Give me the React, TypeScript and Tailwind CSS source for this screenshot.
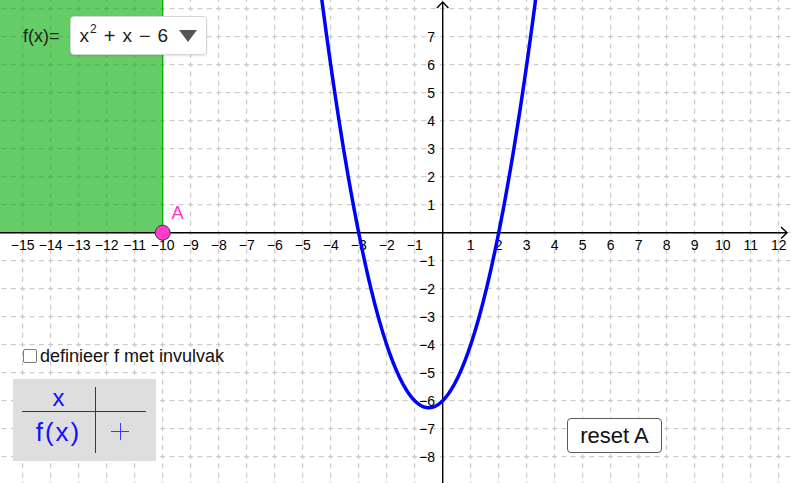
import React from 'react';

// graph coordinate system (pixels per unit and origin)
const U = 28;
const X0 = 442.7;
const Y0 = 232.7;
const W = 791;
const H = 483;

const px = (x: number) => X0 + x * U;
const py = (y: number) => Y0 - y * U;
const minus = (n: number) => (n < 0 ? '\u2212' + Math.abs(n) : String(n));

function Graph() {
  const vLines: number[] = [];
  for (let k = -15; k <= 12; k++) vLines.push(px(k));
  const hLines: number[] = [];
  for (let k = -8; k <= 8; k++) hLines.push(py(k));

  const xLabels: number[] = [];
  for (let k = -15; k <= 12; k++) if (k !== 0) xLabels.push(k);
  const yLabels: number[] = [];
  for (let k = -8; k <= 7; k++) if (k !== 0) yLabels.push(k);

  let d = '';
  for (let x = -4.6; x <= 3.6; x += 0.02) {
    const y = x * x + x - 6;
    d += (d ? ' L' : 'M') + px(x).toFixed(2) + ' ' + py(y).toFixed(2);
  }

  return (
    <svg className="absolute inset-0" width={W} height={H} viewBox={`0 0 ${W} ${H}`}>
      {/* grid */}
      <g stroke="#c0c0c0" strokeWidth="1" strokeDasharray="5 4.33">
        {vLines.map((x) => (
          <line key={'v' + x} x1={x} y1={Y0 - 9 * U - 2.5} x2={x} y2={H} />
        ))}
        {hLines.map((y) => (
          <line key={'h' + y} x1={X0 - 16 * U - 2.5} y1={y} x2={W} y2={y} />
        ))}
      </g>

      {/* shaded region left of A */}
      <rect x={-2} y={-2} width={px(-10) + 2} height={Y0 + 2} fill="rgba(0,172,0,0.6)" />
      <line x1={px(-10)} y1={0} x2={px(-10)} y2={Y0} stroke="#00b000" strokeWidth="1.3" />

      {/* axes */}
      <g stroke="#000" strokeWidth="1.4" fill="none">
        <line x1={0} y1={Y0} x2={787} y2={Y0} />
        <polyline points={`781,227 787,${Y0} 781,238.5`} />
        <line x1={X0} y1={2} x2={X0} y2={H} />
        <polyline points={`437,8 ${X0},2 448.4,8`} />
      </g>

      <g fontFamily="'Liberation Sans', Arial, sans-serif" fontSize="14" fill="#000">
        {xLabels.map((k) => (
          <text key={'xl' + k} x={px(k)} y={Y0 + 17.5} textAnchor="middle">
            {minus(k)}
          </text>
        ))}
        {yLabels.map((k) => (
          <text key={'yl' + k} x={435} y={py(k) + 5} textAnchor="end">
            {minus(k)}
          </text>
        ))}
      </g>

      {/* f(x) */}
      <path d={d} stroke="#0000ff" strokeWidth="3.5" fill="none" strokeLinejoin="round" />

      {/* point A */}
      <circle cx={px(-10)} cy={Y0} r={7.5} fill="#ff3dcb" stroke="#3a3a3a" strokeWidth="1" />
      <text
        x={171.5}
        y={218.5}
        fontFamily="'Liberation Sans', Arial, sans-serif"
        fontSize="18"
        fill="#ff33cc"
      >
        A
      </text>
    </svg>
  );
}

function ValueTable() {
  return (
    <div className="absolute left-[13px] top-[379px] w-[143px] bg-[#dedede] px-[9px] py-[8px] text-[#1010ff]">
      <div className="grid grid-cols-[74px_50px] grid-rows-[25px_41px]">
        <div className="flex items-start justify-center border-b-[1.5px] border-r-[1.5px] border-[#2020ff] text-[24px] leading-[22px]">
          x
        </div>
        <div className="border-b-[1.5px] border-[#2020ff]" />
        <div className="flex items-center justify-center border-r-[1.5px] border-[#2020ff] pb-[2px] text-[26px] leading-none tracking-[2px]">
          f(x)
        </div>
        <div className="flex items-center justify-center pb-[3px] pr-[2px] text-[30px] font-light leading-none text-[#3a3aff]">
          <span className="relative flex h-[17px] w-[18px] items-center justify-center">
            <span className="h-[1px] w-[18px] bg-[#3a3aff]" />
            <span className="absolute h-[17px] w-[1px] bg-[#3a3aff]" />
          </span>
        </div>
      </div>
    </div>
  );
}

export default function App() {
  return (
    <div
      className="relative w-[791px] h-[483px] overflow-hidden bg-white select-none"
      style={{ fontFamily: "'Liberation Sans', Arial, sans-serif" }}
    >
      <Graph />

      {/* function input */}
      <div className="absolute left-[23px] top-[16px] flex items-center gap-[10px]">
        <span className="text-[18px] text-[#222] leading-none">f(x)=</span>
        <div className="flex h-[39px] w-[137px] items-center gap-[7px] rounded-[4px] border border-[#d6d6d6] bg-white pl-[9px] text-[19px] leading-none text-[#222] shadow-[0_1px_2px_rgba(0,0,0,0.12)]">
          <span className="flex items-start">
            x<sup className="relative top-[-3px] ml-[1px] text-[12px] leading-none">2</sup>
          </span>
          <span className="text-[20px]">+</span>
          <span>x</span>
          <span className="text-[20px]">{'\u2212'}</span>
          <span>6</span>
          <svg className="ml-[4px]" width="18" height="12" viewBox="0 0 18 12">
            <polygon points="0,0 18,0 9,12" fill="#555" />
          </svg>
        </div>
      </div>

      {/* checkbox */}
      <label className="absolute left-[23px] top-[345px] flex items-center gap-[3px]">
        <span className="h-[14px] w-[14px] rounded-[2px] border border-[#7a7a7a] bg-white" />
        <span className="text-[18px] leading-[22px] text-[#111]">definieer f met invulvak</span>
      </label>

      <ValueTable />

      {/* reset button */}
      <button className="absolute left-[567px] top-[418px] flex h-[35px] w-[95px] items-center justify-center rounded-[4px] border-[1.5px] border-[#5a5a5a] bg-white text-[22px] leading-none text-[#111]">
        reset A
      </button>
    </div>
  );
}
